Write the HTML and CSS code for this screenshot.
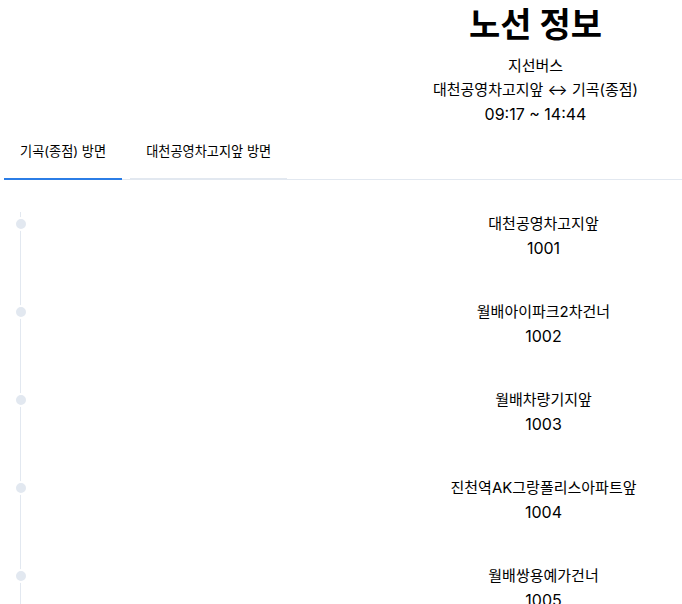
FILE: index.html
```html
<!DOCTYPE html>
<html lang="ko">
<head>
    <meta charset="UTF-8">
    <meta name="viewport" content="width=device-width, initial-scale=1.0">
    <title>노선 정보</title>
    <link rel="stylesheet" href="styles.css">
</head>
<body>
    <div class="page">
        <!-- Route header -->
        <header class="route-header">
            <h1>노선 정보</h1>
            <p class="route-type">지선버스</p>
            <p class="route-ends">대천공영차고지앞 ↔ 기곡(종점)</p>
            <p class="route-time">09:17 ~ 14:44</p>
        </header>

        <!-- Direction tabs -->
        <div class="tabs">
            <button class="tab active">기곡(종점) 방면</button>
            <button class="tab">대천공영차고지앞 방면</button>
        </div>

        <!-- Stop list -->
        <div class="panel">
            <ul class="stops">
                <li class="stop">
                    <div class="stop-name">대천공영차고지앞</div>
                    <div class="stop-id">1001</div>
                </li>
                <li class="stop">
                    <div class="stop-name">월배아이파크2차건너</div>
                    <div class="stop-id">1002</div>
                </li>
                <li class="stop">
                    <div class="stop-name">월배차량기지앞</div>
                    <div class="stop-id">1003</div>
                </li>
                <li class="stop">
                    <div class="stop-name">진천역AK그랑폴리스아파트앞</div>
                    <div class="stop-id">1004</div>
                </li>
                <li class="stop">
                    <div class="stop-name">월배쌍용예가건너</div>
                    <div class="stop-id">1005</div>
                </li>
                <li class="stop">
                    <div class="stop-name">상인역</div>
                    <div class="stop-id">1006</div>
                </li>
            </ul>
        </div>
    </div>
</body>
</html>
```

FILE: styles.css
```css
body {
    margin: 0;
    padding: 0;
    font-family: Inter, "Noto Sans CJK KR", sans-serif;
    color: #000;
    background: #fff;
}

.page {
    width: 1071px;
}

/* Header */
.route-header {
    text-align: center;
}
.route-header h1 {
    margin: 0 0 5px;
    font-size: 34px;
    line-height: 49px;
    font-weight: 700;
    color: #000;
}
.route-header p {
    margin: 0;
    line-height: 24px;
    font-size: 15px;
}
.route-header .route-time {
    font-size: 16px;
}

/* Tabs */
.tabs {
    display: flex;
    gap: 8px;
    margin-left: 4px;
    border-bottom: 1px solid #e2e8f0;
}
.tab {
    font-family: inherit;
    font-size: 13.2px;
    line-height: 21px;
    color: #000;
    background: none;
    border: none;
    border-bottom: 2px solid #e2e8f0;
    margin-bottom: -1px;
    padding: 15px 16px 16px;
    cursor: pointer;
}
.tab.active {
    border-bottom-color: #2b7de6;
}

/* Stops */
.panel {
    padding-top: 32px;
}
.stops {
    position: relative;
    list-style: none;
    margin: 0;
    padding: 0 0 0 16px;
}
.stops::before {
    content: "";
    position: absolute;
    left: 20px;
    top: 0;
    bottom: 0;
    width: 1px;
    background: #e2e8f0;
}
.stop {
    position: relative;
    text-align: center;
    margin-bottom: 40px;
}
.stop::before {
    content: "";
    position: absolute;
    left: -2px;
    top: 5px;
    width: 10px;
    height: 10px;
    border-radius: 50%;
    background: #e2e8f0;
    border: 2px solid #fff;
}
.stop-name {
    font-size: 15px;
    line-height: 24px;
}
.stop-id {
    font-size: 16px;
    line-height: 24px;
}
```
